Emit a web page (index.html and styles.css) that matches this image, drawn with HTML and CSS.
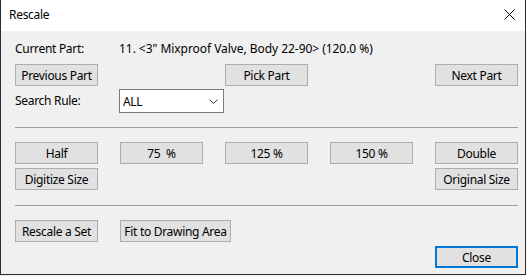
FILE: index.html
```html
<!DOCTYPE html>
<html>
<head>
<meta charset="utf-8">
<link rel="stylesheet" href="styles.css">
</head>
<body>
<div class="window">
  <div class="titlebar">
    <span class="title">Rescale</span>
    <svg class="close-x" width="11" height="11" viewBox="0 0 11 11"><path d="M0.5 0.5 L10.5 10.5 M10.5 0.5 L0.5 10.5" stroke="#000" stroke-width="1" fill="none"/></svg>
  </div>
  <div class="content">
    <div class="row info">
      <span class="label">Current Part:</span>
      <span class="value">11. &lt;3" Mixproof Valve, Body 22-90&gt; (120.0 %)</span>
    </div>
    <div class="grid row2">
      <button class="btn c1">Previous Part</button>
      <button class="btn c3">Pick Part</button>
      <button class="btn c5">Next Part</button>
    </div>
    <div class="grid row3">
      <span class="label c1">Search Rule:</span>
      <div class="select">
        <span>ALL</span>
        <svg class="chev" width="9" height="5" viewBox="0 0 9 5"><path d="M0.5 0.5 L4.5 4.5 L8.5 0.5" stroke="#333" stroke-width="1" fill="none"/></svg>
      </div>
    </div>
    <div class="sep sep1"></div>
    <div class="grid row4">
      <button class="btn">Half</button>
      <button class="btn">75&nbsp; %</button>
      <button class="btn">125 %</button>
      <button class="btn">150 %</button>
      <button class="btn">Double</button>
    </div>
    <div class="grid row5">
      <button class="btn c1">Digitize Size</button>
      <button class="btn c5">Original Size</button>
    </div>
    <div class="sep sep2"></div>
    <div class="grid row6">
      <button class="btn c1">Rescale a Set</button>
      <button class="btn fit">Fit to Drawing Area</button>
    </div>
    <div class="grid row7">
      <button class="btn c5 default">Close</button>
    </div>
  </div>
</div>
</body>
</html>
```

FILE: styles.css
```css
html, body {
  margin: 0;
  padding: 0;
  background: #f0f0f0;
}
.window {
  width: 526px;
  height: 275px;
  box-sizing: border-box;
  border-left: 1px solid #2b2b2b;
  border-right: 1px solid #2b2b2b;
  border-bottom: 1px solid #2b2b2b;
  background: #f0f0f0;
  font-family: "Noto Sans", "Open Sans", sans-serif;
  font-size: 12px;
  letter-spacing: -0.3px;
  color: #000;
}
.titlebar {
  height: 31px;
  background: #fff;
  display: flex;
  align-items: center;
  justify-content: space-between;
  padding: 0 10px 0 8px;
}
.title {
  font-size: 12px;
  line-height: 16px;
  margin-top: -1px;
}
.close-x {
  display: block;
  margin-top: -2px;
}
.content {
  padding: 10px 7px 0 14px;
}
.row.info {
  display: flex;
  line-height: 16px;
  height: 16px;
}
.info .label {
  width: 104px;
}
.info .value {
  letter-spacing: -0.05px;
}
.grid {
  display: grid;
  grid-template-columns: repeat(5, 83px);
  column-gap: 22px;
}
.c1 { grid-column: 1; }
.c3 { grid-column: 3; }
.c5 { grid-column: 5; }
.btn {
  height: 22px;
  box-sizing: border-box;
  background: #e1e1e1;
  border: 1px solid #adadad;
  font-family: inherit;
  font-size: 12px;
  letter-spacing: inherit;
  color: #000;
  padding: 0;
  margin: 0;
  display: flex;
  align-items: center;
  justify-content: center;
  white-space: nowrap;
}
.row2 { margin-top: 7px; }
.row3 {
  margin-top: 3px;
  align-items: center;
}
.row3 .label {
  line-height: 16px;
}
.select {
  grid-column: 2 / span 2;
  width: 105px;
  height: 24px;
  margin-left: -1px;
  box-sizing: border-box;
  background: #fff;
  border: 1px solid #7a7a7a;
  display: flex;
  align-items: center;
  justify-content: space-between;
  padding: 0 5px 0 3px;
}
.chev { display: block; }
.sep {
  height: 1px;
  background: #a0a0a0;
  width: 503px;
}
.sep1 { margin-top: 14px; }
.row4 { margin-top: 14px; }
.row5 { margin-top: 4px; }
.sep2 { margin-top: 15px; }
.row6 { margin-top: 14px; }
.fit {
  grid-column: 2 / span 2;
  width: 111px;
}
.row7 { margin-top: 4px; }
.default {
  border: 2px solid #0078d7;
}
```
